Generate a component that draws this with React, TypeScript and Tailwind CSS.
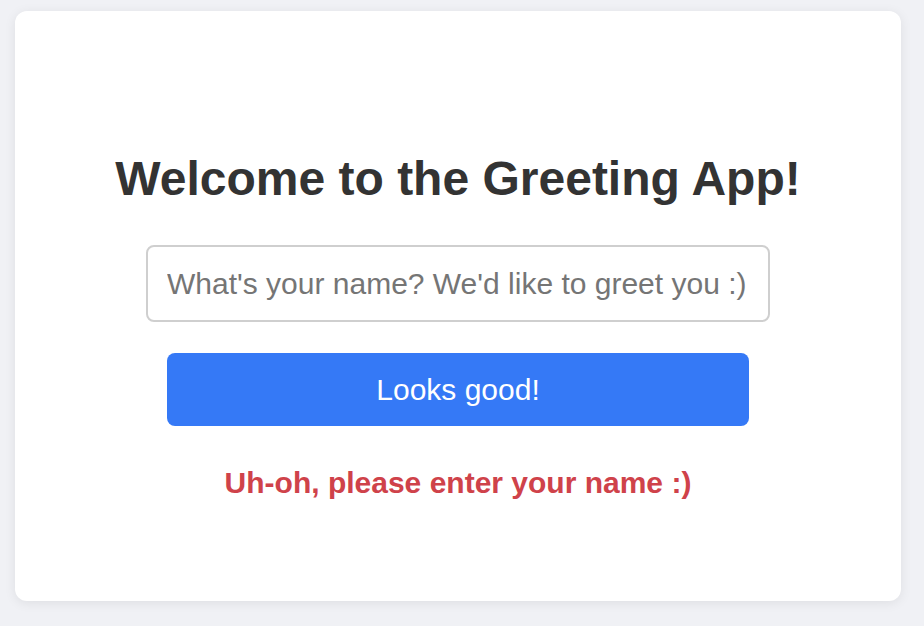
import { useState } from "react";

export default function App() {
  const [name, setName] = useState("");

  return (
    <div className="min-h-[626px] bg-[#f0f1f5] pl-[15px] pt-[11px] font-['Liberation_Sans',Arial,sans-serif]">
      {/* Card */}
      <div className="flex h-[590px] w-[886px] flex-col items-center rounded-xl bg-white pt-[140px] shadow-[0_2px_12px_rgba(0,0,0,0.08)]">
        <h1 className="text-[48px] font-bold leading-[55px] text-[#333333]">
          Welcome to the Greeting App!
        </h1>

        <input
          value={name}
          onChange={(e) => setName(e.target.value)}
          placeholder="What's your name? We'd like to greet you :)"
          className="mt-[39px] h-[77px] w-[624px] rounded-lg border-2 border-[#cfcfcf] px-[19px] text-[30px] text-[#333333] outline-none placeholder:text-[#757575]"
        />

        <button className="mt-[31px] h-[73px] w-[582px] rounded-lg bg-[#3579f6] text-[30px] text-white">
          Looks good!
        </button>

        <p className="mt-[40px] text-[30px] font-bold leading-[34px] text-[#cf424a]">
          Uh-oh, please enter your name :)
        </p>
      </div>
    </div>
  );
}
